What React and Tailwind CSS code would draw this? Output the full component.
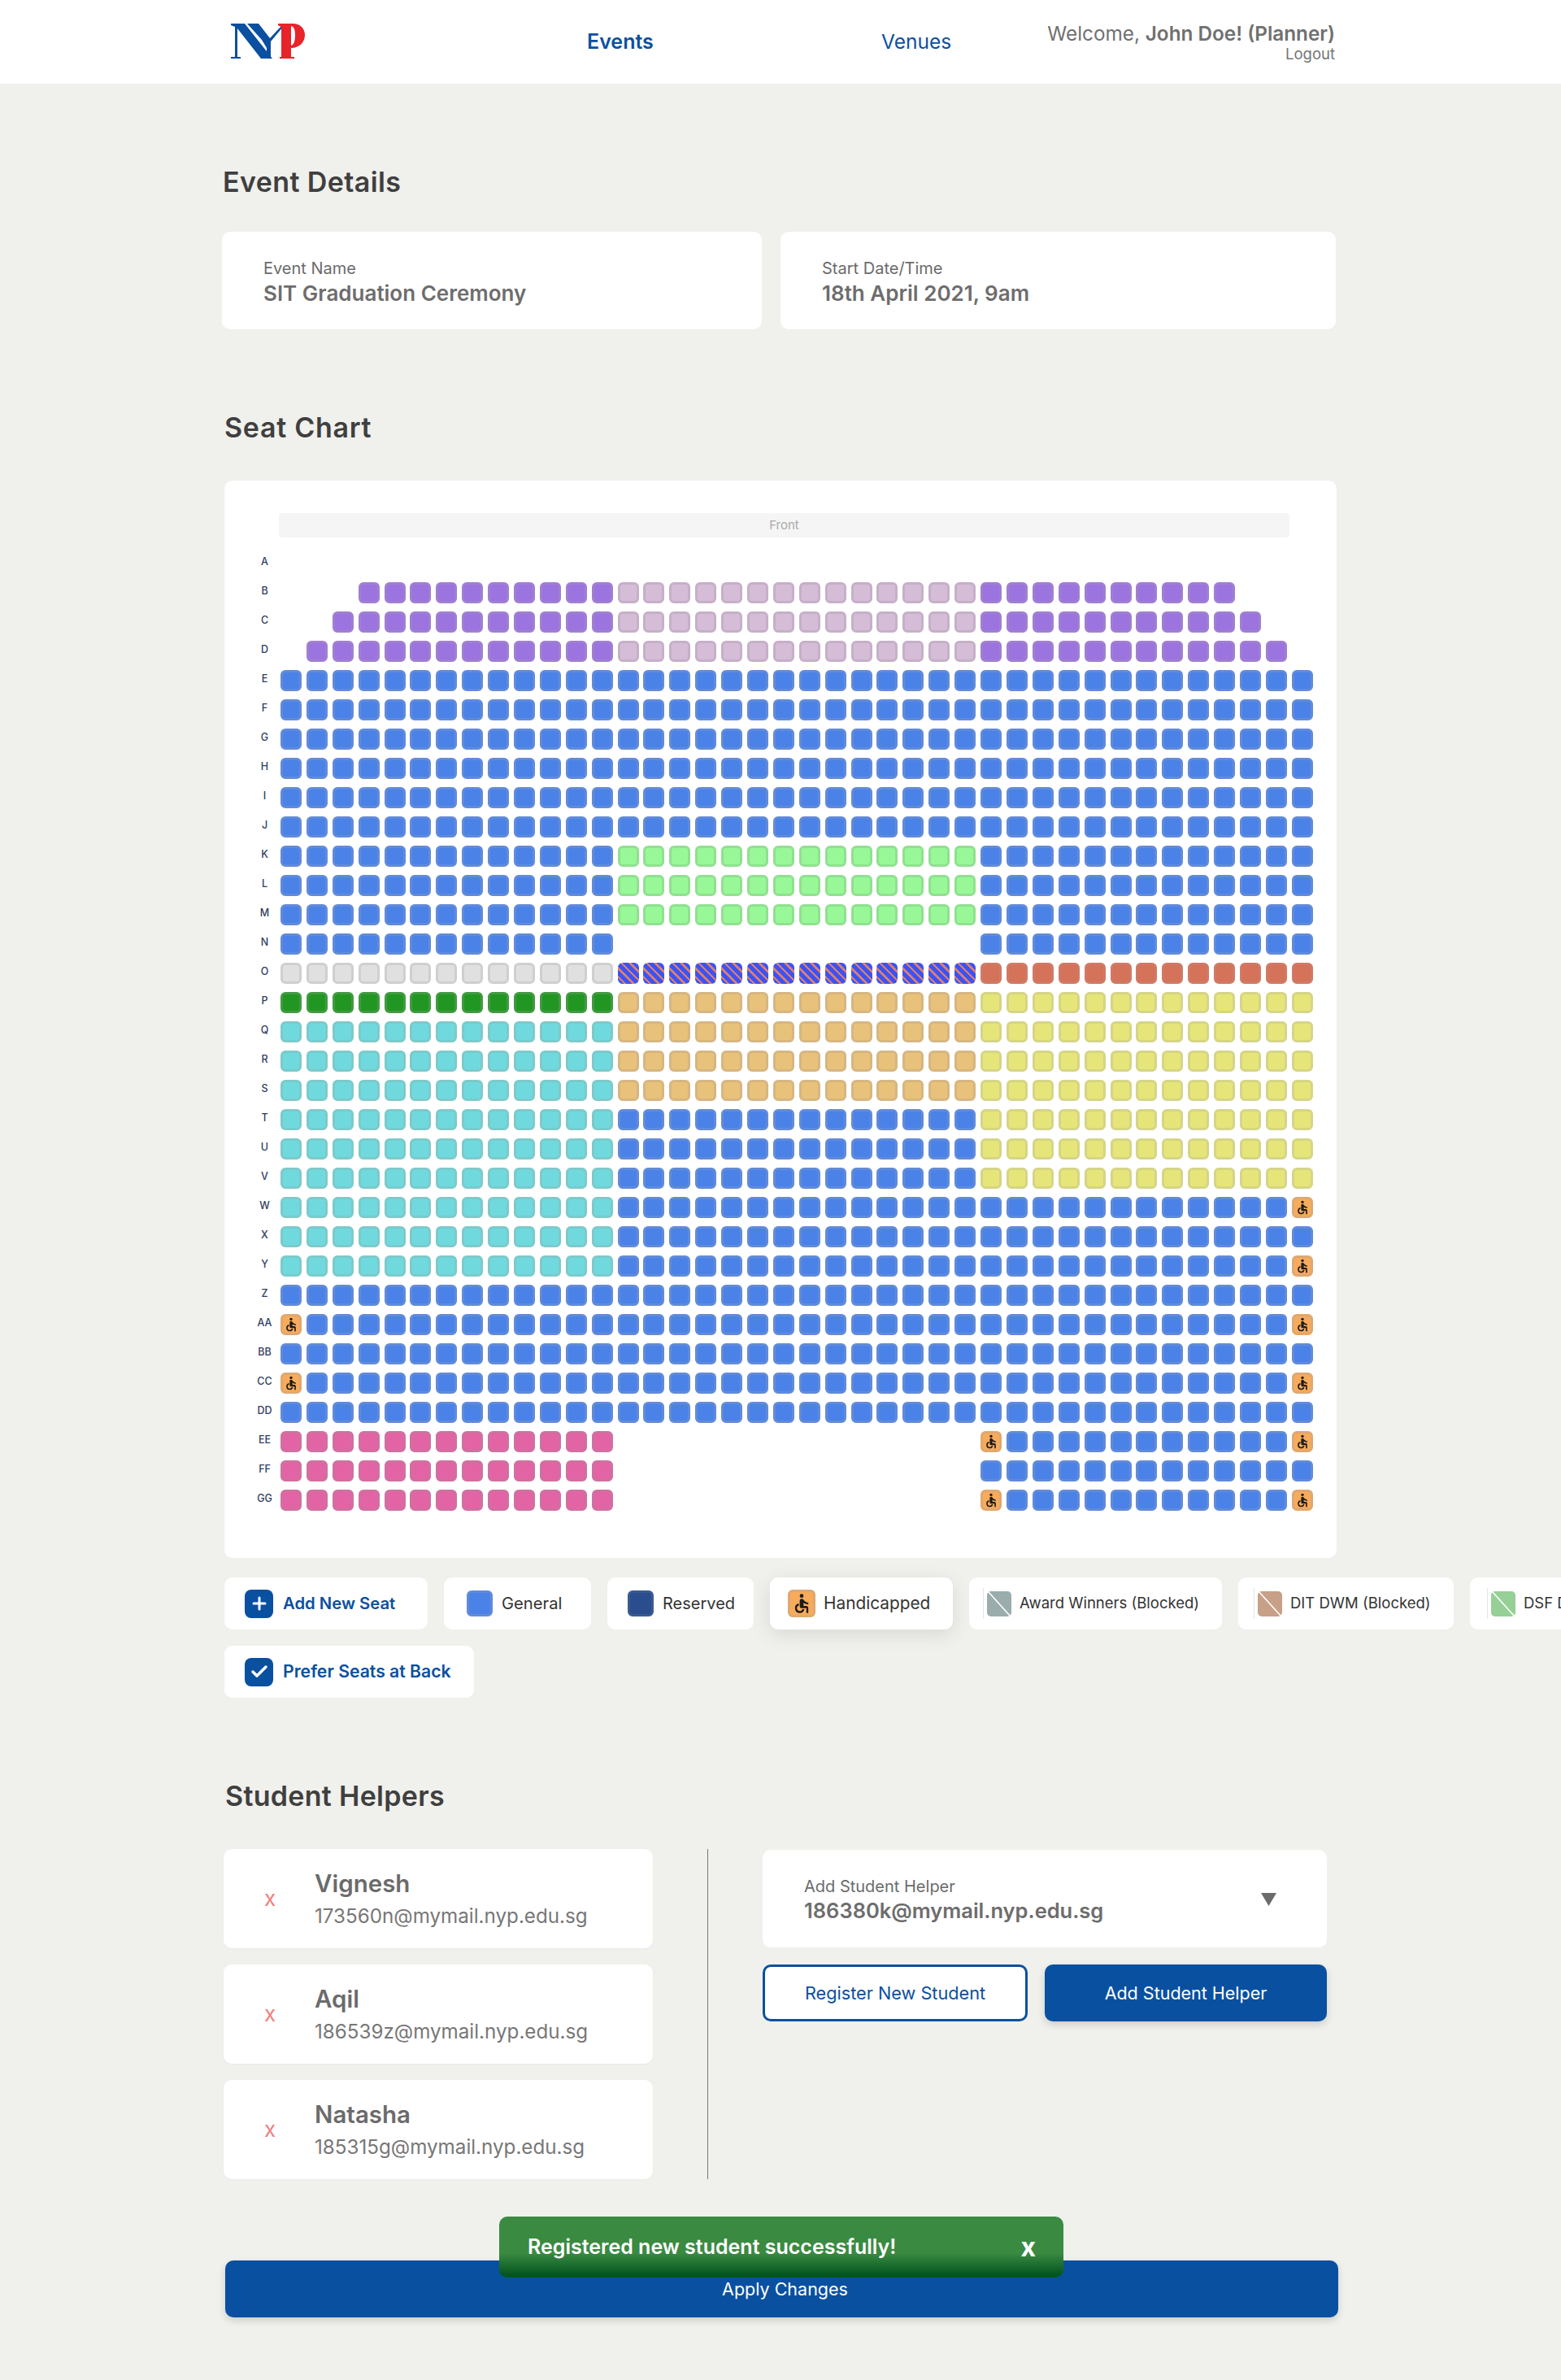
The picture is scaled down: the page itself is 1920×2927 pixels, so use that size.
import { Check, Plus } from 'lucide-react';
import { MdAccessible } from 'react-icons/md';

// colours of the seat kinds: fill + slightly duller border
const SEAT = {
  blue: 'bg-[#4a82e8] border-[#628bd8]',
  purple: 'bg-[#9b74e0] border-[#a07fd0]',
  mauve: 'bg-[#d5bdd8] border-[#c6afc8]',
  green: 'bg-[#98f898] border-[#90e090]',
  gray: 'bg-[#e0e0e0] border-[#cfcfcf]',
  red: 'bg-[#d4725a] border-[#d07a65]',
  dark: 'bg-[#229622] border-[#429a42]',
  tan: 'bg-[#e8c27a] border-[#d6b681]',
  yellow: 'bg-[#e6e57a] border-[#d5d585]',
  teal: 'bg-[#70d9de] border-[#7ccaca]',
  pink: 'bg-[#e264a5] border-[#cf70a0]',
  hc: 'bg-[#f7ab5b] border-[#dfa870]',
};

// [label, left block, middle block, right block, options]
const ROWS = [
  ['A'],
  ['B', 'purple', 'mauve', 'purple', { inset: 3 }],
  ['C', 'purple', 'mauve', 'purple', { inset: 2 }],
  ['D', 'purple', 'mauve', 'purple', { inset: 1 }],
  ['E', 'blue', 'blue', 'blue'],
  ['F', 'blue', 'blue', 'blue'],
  ['G', 'blue', 'blue', 'blue'],
  ['H', 'blue', 'blue', 'blue'],
  ['I', 'blue', 'blue', 'blue'],
  ['J', 'blue', 'blue', 'blue'],
  ['K', 'blue', 'green', 'blue'],
  ['L', 'blue', 'green', 'blue'],
  ['M', 'blue', 'green', 'blue'],
  ['N', 'blue', null, 'blue'],
  ['O', 'gray', 'hatch', 'red'],
  ['P', 'dark', 'tan', 'yellow'],
  ['Q', 'teal', 'tan', 'yellow'],
  ['R', 'teal', 'tan', 'yellow'],
  ['S', 'teal', 'tan', 'yellow'],
  ['T', 'teal', 'blue', 'yellow'],
  ['U', 'teal', 'blue', 'yellow'],
  ['V', 'teal', 'blue', 'yellow'],
  ['W', 'teal', 'blue', 'blue', { hc: [39] }],
  ['X', 'teal', 'blue', 'blue'],
  ['Y', 'teal', 'blue', 'blue', { hc: [39] }],
  ['Z', 'blue', 'blue', 'blue'],
  ['AA', 'blue', 'blue', 'blue', { hc: [0, 39] }],
  ['BB', 'blue', 'blue', 'blue'],
  ['CC', 'blue', 'blue', 'blue', { hc: [0, 39] }],
  ['DD', 'blue', 'blue', 'blue'],
  ['EE', 'pink', null, 'blue', { hc: [27, 39] }],
  ['FF', 'pink', null, 'blue'],
  ['GG', 'pink', null, 'blue', { hc: [27, 39] }],
];

function Seat({ kind }) {
  if (!kind) return <div className="w-[26px] h-[26px] shrink-0" />;
  if (kind === 'hatch') {
    return (
      <div className="w-[26px] h-[26px] shrink-0 rounded-[6px] bg-[repeating-linear-gradient(45deg,#3d52f5_0,#3d52f5_5px,#d9806f_5px,#d9806f_7.5px)]" />
    );
  }
  return (
    <div className={`w-[26px] h-[26px] shrink-0 rounded-[6px] border-[3px] flex items-center justify-center ${SEAT[kind]}`}>
      {kind === 'hc' && <MdAccessible className="w-[20px] h-[20px] shrink-0 text-[#1c1c1c]" />}
    </div>
  );
}

function SeatRow({ row }) {
  const [label, left, mid, right, opts = {}] = row;
  const inset = opts.inset ?? 0;
  const seats = [];
  if (left) {
    for (let i = 0; i < 40; i++) {
      let kind = i < 13 ? left : i < 27 ? mid : right;
      if (i < inset || i >= 40 - inset) kind = null;
      if (opts.hc?.includes(i)) kind = 'hc';
      seats.push(<Seat key={i} kind={kind} />);
    }
  }
  return (
    <div className="flex items-center h-[26px]">
      <div className="w-[39px] shrink-0 -mt-[3px] text-center text-[12.5px] font-medium text-[#2f3e5e]">{label}</div>
      <div className="flex gap-[5.9px]">{seats}</div>
    </div>
  );
}

function Chip({ children, className = '' }) {
  return <div className={`h-[64px] shrink-0 bg-white rounded-[10px] flex items-center ${className}`}>{children}</div>;
}

function Swatch({ className }) {
  return <div className={`w-[32px] h-[32px] rounded-[6px] border-[3px] shrink-0 ${className}`} />;
}

function BlockedChip({ color, name, className, lineClass }) {
  return (
    <Chip className={className}>
      <div className={`h-[38px] w-[5px] border-l border-[#e4e4e4] shrink-0 ${lineClass}`} />
      <svg viewBox="0 0 30 31" className="w-[30px] h-[31px] shrink-0">
        <rect width="30" height="31" rx="5" fill={color} />
        <line x1="1" y1="0" x2="29" y2="31" stroke="#fff" strokeWidth="1.6" />
      </svg>
      <span className="ml-[10px] text-[18.5px] text-[#333] whitespace-nowrap">{name}</span>
    </Chip>
  );
}

function IconChip({ icon, text, className, textClass }) {
  return (
    <Chip className={className}>
      <div className="ml-[25px] w-[35px] h-[35px] rounded-[8px] bg-[#0a50a0] text-white flex items-center justify-center shrink-0">{icon}</div>
      <span className={`ml-[12px] font-semibold text-[#0a50a0] whitespace-nowrap ${textClass}`}>{text}</span>
    </Chip>
  );
}

function Helper({ name, email }) {
  return (
    <div className="h-[122px] bg-white rounded-[10px] flex items-center shadow-[0_1px_2px_rgba(0,0,0,0.03)]">
      <span className="ml-[50px] w-[62px] text-[#f08080] text-[26px] leading-none">x</span>
      <div>
        <div className="text-[29.5px] leading-[36px] font-semibold text-[#6b6b6b]">{name}</div>
        <div className="mt-[8px] text-[24.2px] leading-[30px] text-[#777]">{email}</div>
      </div>
    </div>
  );
}

function Logo() {
  return (
    <svg viewBox="0 0 91 44" className="w-[91px] h-[44px] shrink-0">
      <path fill="#0a4fa0" d="M0 0H17L51 43H37L8 6V41H12V43H0V41H5V4L0 2Z" />
      <path fill="#0a4fa0" d="M20 0H34L48 18L62 3L58 2V0H68V2L65 3L49 22V43H44V30L38 20Z" />
      <path fill="#e8232a" fillRule="evenodd" d="M58 0H76C85 0 91 6 91 14C91 23 84 30 74 30V41H78V43H60V41H62V4L58 2ZM74 3V27C78 26 79 20 79 14C79 8 78 4 74 3Z" />
    </svg>
  );
}

export default function App() {
  return (
    <div className="relative w-[1920px] h-[2927px] overflow-hidden bg-[#f0f0ec] font-[Inter,sans-serif]">
      {/* top bar */}
      <header className="h-[103px] bg-white flex items-center">
        <div className="ml-[284px] -mt-[2px]"><Logo /></div>
        <a className="ml-[347px] w-[362px] text-[25px] font-semibold text-[#0a50a0]">Events</a>
        <a className="text-[24.5px] text-[#0a50a0]">Venues</a>
        <div className="ml-auto mr-[278px] text-right">
          <div className="text-[24.3px] leading-[28px] text-[#707070]">Welcome, <b className="font-semibold">John Doe! (Planner)</b></div>
          <div className="text-[18.5px] leading-[22px] text-[#757575]">Logout</div>
        </div>
      </header>

      {/* event details */}
      <h2 className="mt-[101px] ml-[274px] h-[40px] text-[34px] leading-[40px] font-semibold tracking-[0.4px] text-[#3f3f3f]">Event Details</h2>
      <div className="mt-[41px] ml-[273px] flex gap-[23px]">
        <div className="w-[664px] h-[120px] bg-white rounded-[10px] pl-[51px] pt-[33px]">
          <div className="text-[20px] leading-[24px] text-[#6b6b6b]">Event Name</div>
          <div className="mt-[3px] text-[26px] leading-[32px] font-semibold text-[#6d6d6d]">SIT Graduation Ceremony</div>
        </div>
        <div className="w-[683px] h-[120px] bg-white rounded-[10px] pl-[51px] pt-[33px]">
          <div className="text-[20px] leading-[24px] text-[#6b6b6b]">Start Date/Time</div>
          <div className="mt-[3px] text-[26px] leading-[32px] font-semibold text-[#6d6d6d]">18th April 2021, 9am</div>
        </div>
      </div>

      {/* seat chart */}
      <h2 className="mt-[101px] ml-[276px] h-[40px] text-[34px] leading-[40px] font-semibold tracking-[0.7px] text-[#3f3f3f]">Seat Chart</h2>
      <section className="mt-[45px] ml-[276px] w-[1368px] h-[1325px] bg-white rounded-[10px] pl-[30px] pt-[40px]">
        <div className="ml-[37px] w-[1243px] h-[30px] rounded-[4px] bg-[#f5f5f5] flex items-center justify-center text-[15px] text-[#aaa]">Front</div>
        <div className="mt-[19px] flex flex-col gap-[10px]">
          {ROWS.map((r) => <SeatRow key={r[0]} row={r} />)}
        </div>
      </section>

      {/* legend */}
      <div className="mt-[24px] ml-[276px] flex gap-[20px]">
        <IconChip className="w-[250px]" textClass="text-[20.3px]" text="Add New Seat" icon={<Plus className="w-[24px] h-[24px]" strokeWidth={3} />} />
        <Chip className="w-[181px]">
          <Swatch className="ml-[28px] bg-[#4a82e8] border-[#628bd8]" />
          <span className="ml-[11px] text-[20.2px] text-[#333]">General</span>
        </Chip>
        <Chip className="w-[180px]">
          <Swatch className="ml-[25px] bg-[#2a4d8e] border-[#3a5a90]" />
          <span className="ml-[11px] text-[20px] text-[#333]">Reserved</span>
        </Chip>
        <Chip className="w-[225px] shadow-[0_6px_24px_rgba(0,0,0,0.1)]">
          <div className="ml-[22px] w-[34px] h-[34px] rounded-[6px] border-[3px] bg-[#f7ab5b] border-[#dfa870] flex items-center justify-center shrink-0">
            <MdAccessible className="w-[28px] h-[28px] shrink-0 text-[#1c1c1c]" />
          </div>
          <span className="ml-[10px] text-[20.8px] text-[#333]">Handicapped</span>
        </Chip>
        <BlockedChip className="w-[311px]" lineClass="ml-[17px]" color="#9aacac" name="Award Winners (Blocked)" />
        <BlockedChip className="w-[265px]" lineClass="ml-[19px]" color="#c8a088" name="DIT DWM (Blocked)" />
        <BlockedChip className="w-[265px]" lineClass="ml-[21px]" color="#96d096" name="DSF DWM (Blocked)" />
      </div>
      <div className="mt-[20px] ml-[276px] flex">
        <IconChip className="w-[307px]" textClass="text-[21.2px]" text="Prefer Seats at Back" icon={<Check className="w-[24px] h-[24px]" strokeWidth={3.5} />} />
      </div>

      {/* student helpers */}
      <h2 className="mt-[101px] ml-[277px] h-[40px] text-[34px] leading-[40px] font-semibold tracking-[0.3px] text-[#3f3f3f]">Student Helpers</h2>
      <div className="mt-[45px] ml-[275px] flex">
        <div className="w-[528px] flex flex-col gap-[20px]">
          <Helper name="Vignesh" email="173560n@mymail.nyp.edu.sg" />
          <Helper name="Aqil" email="186539z@mymail.nyp.edu.sg" />
          <Helper name="Natasha" email="185315g@mymail.nyp.edu.sg" />
        </div>
        <div className="ml-[67px] w-px bg-[#777]" />
        <div className="ml-[67px] mt-px w-[694px]">
          <div className="h-[120px] bg-white rounded-[10px] pl-[51px] pr-[62px] pt-[2px] flex items-center justify-between">
            <div className="pt-[2px]">
              <div className="text-[20px] leading-[24px] text-[#6b6b6b]">Add Student Helper</div>
              <div className="mt-[2px] text-[25.5px] leading-[32px] font-semibold text-[#6d6d6d]">186380k@mymail.nyp.edu.sg</div>
            </div>
            <svg viewBox="0 0 19 16" className="w-[19px] h-[16px] shrink-0"><path d="M0 0H19L9.500 16Z" fill="#6b6b6b" /></svg>
          </div>
          <div className="mt-[21px] flex gap-[21px]">
            <button className="w-[326px] h-[70px] rounded-[10px] border-[3px] border-[#0a50a0] bg-white text-[#0a50a0] text-[21.7px]">Register New Student</button>
            <button className="w-[347px] h-[70px] rounded-[10px] bg-[#0a50a0] text-white text-[21.5px] shadow-[0_4px_10px_rgba(0,0,0,0.15)]">Add Student Helper</button>
          </div>
        </div>
      </div>

      <button className="mt-[100px] ml-[277px] pl-[8px] w-[1369px] h-[70px] rounded-[10px] bg-[#0a50a0] text-white text-[21.5px] shadow-[0_4px_10px_rgba(0,0,0,0.15)]">Apply Changes</button>

      {/* toast sits over the apply button */}
      <div className="absolute left-[614px] top-[2726px] w-[694px] h-[75px] rounded-[10px] bg-[linear-gradient(180deg,#3a8a42_0%,#3a8a42_60%,#04561f_95%)] flex items-center justify-between pl-[35px] pr-[34px]">
        <span className="text-[25px] font-semibold text-white">Registered new student successfully!</span>
        <span className="text-[32px] font-bold text-white leading-none">x</span>
      </div>
    </div>
  );
}
